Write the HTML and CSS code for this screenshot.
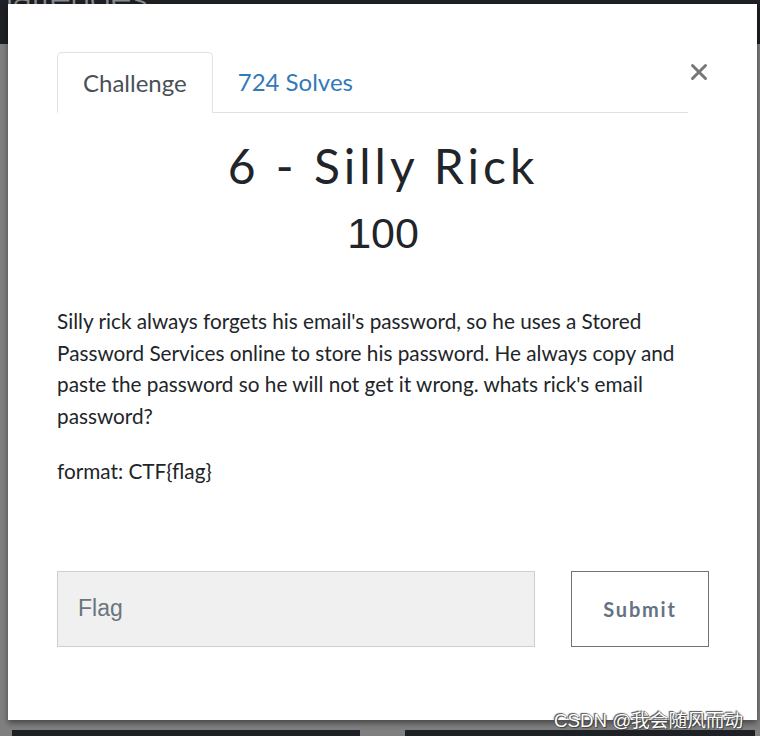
FILE: index.html
```html
<!DOCTYPE html>
<html>
<head>
<meta charset="utf-8">
<link rel="stylesheet" href="styles.css">
</head>
<body>
<div class="page">
  <header class="navbar"><span class="nav-title">Challenges</span></header>
  <div class="page-fill"></div>
  <div class="cards">
    <div class="card card-a"></div>
    <div class="card card-b"></div>
  </div>
</div>

<div class="modal">
  <div class="tabs-row">
    <div class="tabs">
      <div class="tab active">Challenge</div>
      <div class="tab link">724 Solves</div>
    </div>
    <button class="close" aria-label="Close">
      <svg width="18" height="18" viewBox="0 0 18 18"><path d="M2.5 2.5 L15.5 15.5 M15.5 2.5 L2.5 15.5" stroke="#777" stroke-width="3" stroke-linecap="round"/></svg>
    </button>
  </div>
  <h1 class="title">6 - Silly Rick</h1>
  <div class="points">100</div>
  <p class="desc">Silly rick always forgets his email's password, so he uses a Stored Password Services online to store his password. He always copy and paste the password so he will not get it wrong. whats rick's email password?</p>
  <p class="format">format: CTF{flag}</p>
  <div class="submit-row">
    <input class="flag-input" type="text" placeholder="Flag">
    <button class="submit">Submit</button>
  </div>
</div>

<div class="watermark">CSDN @我会随风而动</div>
</body>
</html>
```
FILE: styles.css
```css
html, body {
  margin: 0;
  padding: 0;
  width: 760px;
  height: 736px;
  overflow: hidden;
}
body {
  background: #7f7f7f;
  font-family: Lato, "Noto Sans", sans-serif;
}
.page {
  display: flex;
  flex-direction: column;
  height: 736px;
}
.navbar {
  height: 44px;
  background: #1d2024;
  overflow: hidden;
  position: relative;
}
.nav-title {
  display: block;
  margin-top: -22px;
  margin-left: -30px;
  font-size: 34px;
  color: #8a8d90;
  font-family: Raleway, Lato, sans-serif;
}
.page-fill {
  flex: 1;
}
.cards {
  display: flex;
  height: 6px;
  padding-left: 12px;
}
.card {
  background: #1d2024;
  height: 6px;
}
.card-a { width: 348px; }
.card-b { width: 350px; margin-left: 45px; }

.modal {
  position: absolute;
  left: 8px;
  top: 4px;
  width: 749px;
  height: 716px;
  background: #fff;
  box-shadow: 0 3px 6px rgba(0,0,0,0.45);
  box-sizing: border-box;
  padding: 48px 0 0 49px;
}
.tabs-row {
  display: flex;
  align-items: flex-start;
}
.tabs {
  display: flex;
  width: 631px;
  height: 61px;
  border-bottom: 1px solid #dee2e6;
  box-sizing: border-box;
}
.tab {
  font-size: 24px;
  height: 61px;
  box-sizing: border-box;
  line-height: 60px;
  padding: 0 25px;
}
.tab.active {
  color: #495057;
  border: 1px solid #dee2e6;
  border-bottom-color: #fff;
  border-radius: 5px 5px 0 0;
  background: #fff;
}
.tab.link {
  color: #337ab7;
}
.close {
  margin-left: 1px;
  margin-top: 10px;
  background: none;
  border: 0;
  padding: 0;
  width: 20px;
  height: 20px;
  display: flex;
  align-items: center;
  justify-content: center;
}
.title {
  margin: 24px 0 0 0;
  width: 652px;
  text-align: center;
  font-family: Lato, sans-serif;
  font-weight: 400;
  font-size: 48px;
  letter-spacing: 4px;
  line-height: 58px;
  color: #212529;
}
.points {
  width: 652px;
  text-align: center;
  font-family: "Liberation Sans", Arial, sans-serif;
  font-size: 43px;
  line-height: 50px;
  margin-top: 13px;
  color: #212529;
}
.desc {
  margin: 48px 0 0 0;
  width: 620px;
  font-size: 20.75px;
  line-height: 31.5px;
  color: #212529;
}
.format {
  margin: 24px 0 0 0;
  font-size: 20.75px;
  line-height: 31.5px;
  color: #212529;
}
.submit-row {
  display: flex;
  margin-top: 83px;
}
.flag-input {
  width: 478px;
  height: 76px;
  box-sizing: border-box;
  background: #f0f0f0;
  border: 1px solid #ccd0d4;
  padding: 0 20px;
  font-family: "Liberation Sans", Arial, sans-serif;
  font-size: 23px;
  color: #495057;
  outline: none;
}
.flag-input::placeholder {
  color: #6c757d;
}
.submit {
  margin-left: 36px;
  width: 138px;
  height: 76px;
  box-sizing: border-box;
  background: #fff;
  border: 1px solid #6c757d;
  font-family: Lato, sans-serif;
  font-weight: 700;
  font-size: 20px;
  letter-spacing: 1.8px;
  color: #647383;
  padding: 0;
}
.watermark {
  position: absolute;
  left: 554px;
  top: 705px;
  font-family: "Liberation Sans", "Noto Sans CJK SC", sans-serif;
  font-size: 18.7px;
  color: #fff;
  text-shadow: 0 0 1px #333, 1px 1px 1px #444, -1px -1px 1px #555;
}
```
